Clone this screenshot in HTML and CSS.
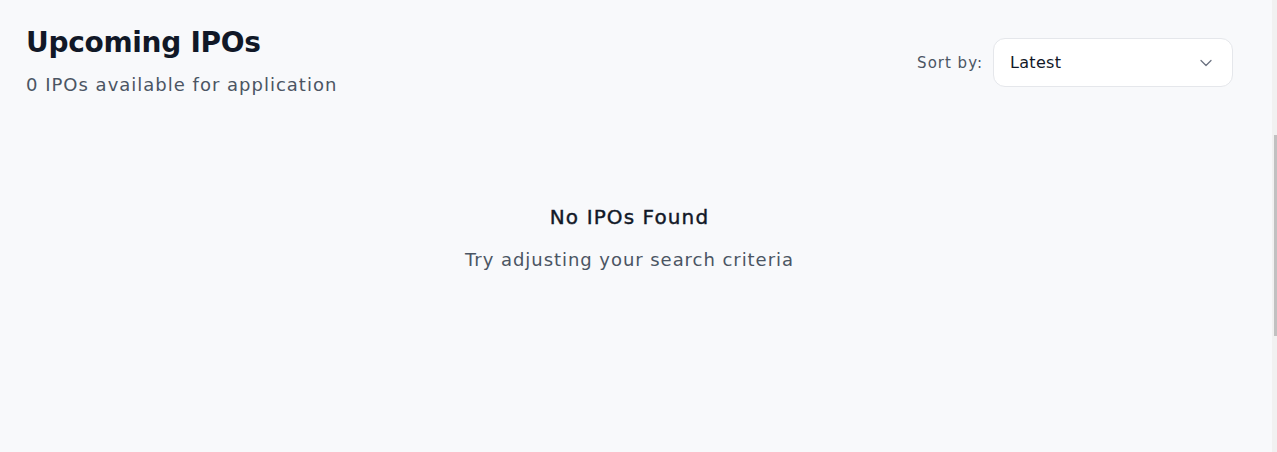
FILE: index.html
```html
<!DOCTYPE html>
<html lang="en">
<head>
<meta charset="utf-8">
<title>Upcoming IPOs</title>
<link rel="stylesheet" href="styles.css">
</head>
<body>
<main class="page">
  <header class="header">
    <div class="heading">
      <h1 class="title">Upcoming IPOs</h1>
      <p class="subtitle">0 IPOs available for application</p>
    </div>
    <div class="sort">
      <span class="sort-label">Sort by:</span>
      <div class="select">
        <span class="select-value">Latest</span>
        <svg class="chevron" width="20" height="20" viewBox="0 0 24 24" fill="none" stroke="currentColor" stroke-width="1.5" stroke-linecap="round" stroke-linejoin="round"><path d="M6 9l6 6 6-6"/></svg>
      </div>
    </div>
  </header>
  <section class="empty">
    <h2 class="empty-title">No IPOs Found</h2>
    <p class="empty-text">Try adjusting your search criteria</p>
  </section>
</main>
<div class="scrollbar"><div class="scrollbar-thumb"></div></div>
</body>
</html>
```
FILE: styles.css
```css
html, body {
  margin: 0;
  height: 100%;
}
body {
  background: #f8f9fb;
  font-family: "DejaVu Sans", "Open Sans", sans-serif;
  color: #111827;
}
.page {
  padding: 25px 44px 0 26px;
}
.header {
  display: flex;
  justify-content: space-between;
  align-items: flex-start;
}
.title {
  margin: 0;
  font-size: 28px;
  line-height: 36px;
  font-weight: 700;
  letter-spacing: -0.3px;
  color: #111827;
}
.subtitle {
  margin: 10px 0 0;
  font-size: 18px;
  line-height: 28px;
  letter-spacing: 1px;
  color: #4b5563;
}
.sort {
  display: flex;
  align-items: center;
  gap: 10px;
  margin-top: 13px;
}
.sort-label {
  font-size: 15px;
  letter-spacing: 1px;
  color: #4b5563;
}
.select {
  box-sizing: border-box;
  width: 240px;
  height: 49px;
  padding: 0 16px;
  display: flex;
  align-items: center;
  justify-content: space-between;
  background: #ffffff;
  border: 1px solid #e5e7eb;
  border-radius: 12px;
}
.select-value {
  font-size: 16px;
  letter-spacing: 0.3px;
  color: #111827;
}
.chevron {
  color: #6b7280;
}
.empty {
  text-align: center;
  margin-top: 104px;
}
.empty-title {
  margin: 0;
  font-size: 20px;
  line-height: 28px;
  font-weight: 400;
  letter-spacing: 1.1px;
  -webkit-text-stroke: 0.4px #111827;
  color: #111827;
}
.empty-text {
  margin: 15px 0 0;
  font-size: 18px;
  line-height: 28px;
  letter-spacing: 0.95px;
  color: #4b5563;
}
.scrollbar {
  position: fixed;
  top: 0;
  right: 0;
  width: 5px;
  height: 100%;
  background: #f1f1f1;
}
.scrollbar-thumb {
  position: absolute;
  right: 0;
  top: 135px;
  width: 3px;
  height: 201px;
  background: #c1c1c1;
}
```
